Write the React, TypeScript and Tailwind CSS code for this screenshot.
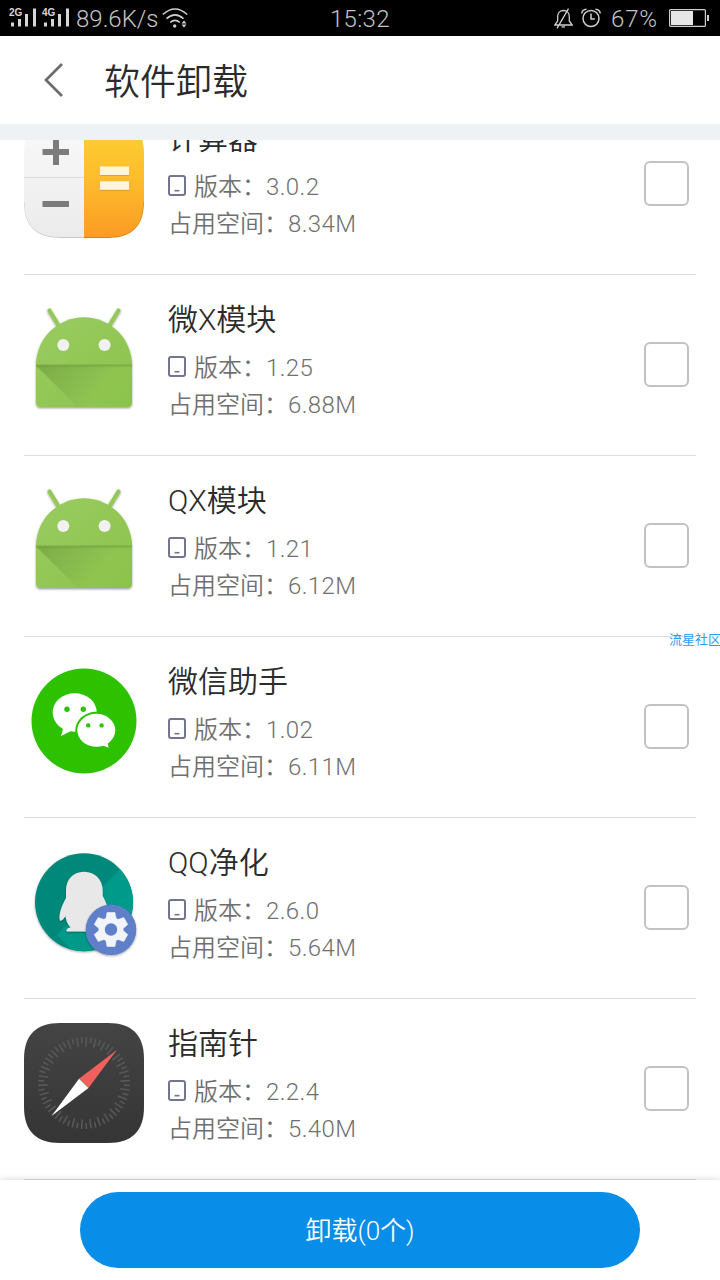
import React from "react";

const CJK = "font-['Roboto','Noto_Sans_CJK_SC',sans-serif]";

function CalculatorIcon() {
  return (
    <svg viewBox="0 0 120 120" className="size-[120px]">
      <defs>
        <linearGradient id="calcOrange" x1="0" y1="0" x2="0" y2="1">
          <stop offset="0.1" stopColor="#fdce33" />
          <stop offset="0.5" stopColor="#fdbd2c" />
          <stop offset="1" stopColor="#fb9b23" />
        </linearGradient>
        <linearGradient id="calcGrey" x1="0" y1="0" x2="0" y2="1">
          <stop offset="0" stopColor="#fafafa" />
          <stop offset="1" stopColor="#ebebeb" />
        </linearGradient>
        <clipPath id="calcShape">
          <path d="M36 0H84C108 0 120 12 120 36V84C120 108 108 120 84 120H36C12 120 0 108 0 84V36C0 12 12 0 36 0Z" />
        </clipPath>
      </defs>
      <g clipPath="url(#calcShape)">
        <rect width="60" height="120" fill="url(#calcGrey)" />
        <rect x="60" width="60" height="120" fill="url(#calcOrange)" />
        <rect y="59" width="60" height="1" fill="#dcdcdc" />
        <path d="M0 84C0 108 12 119.5 36 119.5H84C108 119.5 119.5 108 119.5 84" fill="none" stroke="#000" strokeOpacity="0.15" />
      </g>
      <path d="M29 20.500H35V31H45V37H35V47H29V37H18.500V31H29Z" fill="#7c7c7c" />
      <rect x="18.500" y="83" width="26.500" height="6" rx="0.500" fill="#7c7c7c" />
      <g fill="#c97f10" opacity="0.4">
        <rect x="76" y="49.500" width="29" height="8.500" />
        <rect x="76" y="64.500" width="29" height="8.500" />
      </g>
      <rect x="76" y="48.500" width="29" height="8.500" fill="#fff5df" />
      <rect x="76" y="63.300" width="29" height="8.500" fill="#fff5df" />
    </svg>
  );
}

function AndroidIcon({ id }: { id: string }) {
  return (
    <svg viewBox="0 0 120 120" className="size-[120px]">
      <defs>
        <linearGradient id={`${id}fold`} gradientUnits="userSpaceOnUse" x1="22" y1="66" x2="66" y2="104">
          <stop offset="0" stopColor="#567d2c" stopOpacity="0.36" />
          <stop offset="1" stopColor="#567d2c" stopOpacity="0" />
        </linearGradient>
        <linearGradient id={`${id}line`} x1="0" y1="0" x2="0" y2="1">
          <stop offset="0" stopColor="#4c7425" stopOpacity="0.36" />
          <stop offset="1" stopColor="#4c7425" stopOpacity="0" />
        </linearGradient>
        <linearGradient id={`${id}body`} x1="0" y1="0" x2="1" y2="1">
          <stop offset="0" stopColor="#9acb61" />
          <stop offset="1" stopColor="#8bc34a" />
        </linearGradient>
        <filter id={`${id}shadow`} x="-10%" y="-10%" width="120%" height="125%">
          <feDropShadow dx="0" dy="1.200" stdDeviation="1" floodOpacity="0.4" />
        </filter>
      </defs>
      <g filter={`url(#${id}shadow)`}>
        <path d="M25.500 11.500L35.500 28M94.500 11.500L84.500 28" stroke="#94c95a" strokeWidth="4.300" strokeLinecap="round" />
        <path d="M12 66.300A48 48 0 0 1 108 66.300V103.500Q108 108 103.500 108H16.500Q12 108 12 103.500Z" fill={`url(#${id}body)`} />
      </g>
      <path d="M12 66.500H108V108H54Z" fill={`url(#${id}fold)`} />
      <rect x="12" y="65.500" width="96" height="3.500" fill={`url(#${id}line)`} />
      <circle cx="39.300" cy="46" r="6" fill="#f1f1f1" />
      <circle cx="80.600" cy="46" r="6" fill="#f1f1f1" />
    </svg>
  );
}

function WechatIcon() {
  return (
    <svg viewBox="0 0 120 120" className="size-[120px]">
      <circle cx="60" cy="60" r="52.500" fill="#2dc100" />
      <ellipse cx="50.700" cy="51.500" rx="22" ry="19.300" fill="#fff" />
      <path d="M39.500 66L37 75L48 69.500Z" fill="#fff" />
      <ellipse cx="72.300" cy="69.300" rx="21" ry="18.500" fill="#2dc100" />
      <ellipse cx="72.300" cy="69.300" rx="19" ry="16.500" fill="#fff" />
      <path d="M83 79L84.700 86.700L76 83.500Z" fill="#fff" />
      <g fill="#2dc100">
        <circle cx="43" cy="48.300" r="2.700" />
        <circle cx="59.300" cy="48.300" r="2.700" />
        <circle cx="64.200" cy="64.400" r="2.200" />
        <circle cx="77.600" cy="64.400" r="2.200" />
      </g>
    </svg>
  );
}

function PenguinIcon() {
  return (
    <svg viewBox="0 0 120 120" className="size-[120px]">
      <defs>
        <filter id="pengShadow" x="-15%" y="-15%" width="135%" height="135%">
          <feDropShadow dx="0" dy="1" stdDeviation="1.200" floodOpacity="0.35" />
        </filter>
        <clipPath id="pengClip">
          <circle cx="60" cy="60.300" r="49" />
        </clipPath>
      </defs>
      <circle cx="60" cy="60.300" r="49" fill="#00897a" filter="url(#pengShadow)" />
      <path d="M97 26L33 93L60 120H120V26Z" fill="#009a8a" clipPath="url(#pengClip)" />
      <g filter="url(#pengShadow)">
        <path
          d="M60 29.700C71.500 29.700 78.700 38 78.700 48.500V54C82 60 84.500 66 84.500 74L78 89.500H43C41.500 88 43 86.300 46.500 85.500C43.500 82 42 78.500 41.500 74C39.800 77 37.500 79.500 36 78.500C34.500 74 36.500 66 42 56V48.500C42 38 48.500 29.700 60 29.700Z"
          fill="#e9e8e9"
        />
      </g>
      <g filter="url(#pengShadow)">
        <circle cx="87" cy="87.800" r="25.300" fill="#5f80c8" />
      </g>
      <g transform="translate(87 87.500)" fill="#f1f4fb">
        {[0, 60, 120, 180, 240, 300].map((a) => (
          <path key={a} d="M-5.500 -9L-3.900 -17H3.900L5.500 -9Z" strokeLinejoin="round" stroke="#f1f4fb" strokeWidth="0.600" transform={`rotate(${a})`} />
        ))}
        <circle r="12.400" />
        <circle r="6.200" fill="#5f80c8" />
      </g>
    </svg>
  );
}

function CompassIcon() {
  const ticks = Array.from({ length: 60 }, (_, i) => i);
  return (
    <svg viewBox="0 0 120 120" className="size-[120px]">
      <defs>
        <linearGradient id="compassBg" x1="0" y1="0" x2="0" y2="1">
          <stop offset="0" stopColor="#444" />
          <stop offset="1" stopColor="#353535" />
        </linearGradient>
      </defs>
      <path d="M36 0H84C108 0 120 12 120 36V84C120 108 108 120 84 120H36C12 120 0 108 0 84V36C0 12 12 0 36 0Z" fill="url(#compassBg)" />
      <g stroke="#585858" strokeWidth="1.600">
        {ticks.map((i) => (
          <line key={i} x1="60" x2="60" y1="14" y2={i % 2 ? 20 : 23.5} transform={`rotate(${i * 6 + 3} 60 60)`} />
        ))}
      </g>
      <path d="M92.500 27.300L55 55.700L64.500 64.900Z" fill="#f0605e" />
      <path d="M27.800 92.800L55 55.700L64.500 64.900Z" fill="#fff" />
    </svg>
  );
}

type AppItem = { name: string; version: string; size: string; icon: React.ReactNode };

const items: AppItem[] = [
  { name: "计算器", version: "3.0.2", size: "8.34M", icon: <CalculatorIcon /> },
  { name: "微X模块", version: "1.25", size: "6.88M", icon: <AndroidIcon id="wx" /> },
  { name: "QX模块", version: "1.21", size: "6.12M", icon: <AndroidIcon id="qx" /> },
  { name: "微信助手", version: "1.02", size: "6.11M", icon: <WechatIcon /> },
  { name: "QQ净化", version: "2.6.0", size: "5.64M", icon: <PenguinIcon /> },
  { name: "指南针", version: "2.2.4", size: "5.40M", icon: <CompassIcon /> },
];

function Row({ item }: { item: AppItem }) {
  return (
    <li className="flex h-[181px] shrink-0 border-b border-[#dedede]">
      <div className="mt-6 size-[120px] shrink-0">{item.icon}</div>
      <div className="ml-6 flex-1 pt-[23px] font-[350]">
        <h2 className="text-[30px] leading-[44px] whitespace-nowrap text-[#2b2b2b]">{item.name}</h2>
        <div className="mt-2 flex text-2xl leading-[37px] whitespace-nowrap text-[#707070]">
          <svg viewBox="0 0 18 21" className="mt-1.5 mr-2 h-[21px] w-[18px]" fill="none" stroke="#73758f" strokeWidth="2">
            <rect x="1" y="1" width="16" height="19" rx="2" />
            <path d="M6.500 15.700H11.500" strokeWidth="1.600" />
          </svg>
          <span>版本：</span>
          <span className="tracking-[0.4px]">{item.version}</span>
        </div>
        <div className="flex text-2xl leading-[37px] whitespace-nowrap text-[#707070]">
          <span>占用空间：</span>
          <span className="tracking-[0.4px]">{item.size}</span>
        </div>
      </div>
      <div className="mt-[67px] mr-[7px] size-[45px] rounded-md border-2 border-[#c2c2c2]" />
    </li>
  );
}

function Signal({ label }: { label: string }) {
  return (
    <svg viewBox="0 0 28 20" className="h-5 w-7" fill="#d6d6d6">
      <text x="0" y="7.800" fontSize="10" fontWeight="700" fontFamily="Liberation Sans">
        {label}
      </text>
      <path d="M2 14.500h3v4h-3zM9 11h3v7.500h-3zM16 6h3v12.500h-3zM24 .5h3v18h-3z" />
    </svg>
  );
}

function StatusBar() {
  return (
    <div className="flex h-9 shrink-0 items-center bg-black text-2xl font-[350] text-[#c4c4c4]">
      <div className="flex w-[331px] items-center pl-[9px]">
        <Signal label="2G" />
        <div className="ml-[5px] flex">
          <Signal label="4G" />
        </div>
        <span className="ml-1.5 w-[86px] pt-0.5">89.6K/s</span>
        <svg viewBox="0 0 26 20" className="h-5 w-[26px]" fill="none" stroke="#cfcfcf" strokeWidth="1.600">
          <path d="M.8 6.500Q13 -4.500 25.200 6.500M4.500 10.700Q13 3 21.500 10.700M8.200 14.500Q13 10.200 17.800 14.500" />
          <circle cx="12.700" cy="18" r="1.700" fill="#cfcfcf" stroke="none" />
          <path d="M19.500 15.500L22 12.500L24.500 15.500ZM19.500 16.500L22 19.500L24.500 16.500Z" fill="#cfcfcf" stroke="none" />
        </svg>
      </div>
      <span className="-ml-px w-[60px] pt-0.5 tracking-[0.3px] whitespace-nowrap">15:32</span>
      <div className="flex flex-1 items-center justify-end pr-[11px]">
        <svg viewBox="0 0 19 21" className="h-[21px] w-[19px]" fill="none" stroke="#cfcfcf" strokeWidth="1.300">
          <path d="M.8 17H18.200L15.300 13V8.500C15.300 5 13 2.500 9.500 2.500S3.700 5 3.700 8.500V13ZM7.500 18.800H11M14.500 .7L3 20.300" />
        </svg>
        <svg viewBox="0 0 20 20" className="ml-2 size-5" fill="none" stroke="#cfcfcf" strokeWidth="1.500">
          <circle cx="10" cy="10.500" r="8" />
          <path d="M10 5.500V11H13.800M.8 5.500Q1 1.500 5.500 1.200M19.200 5.500Q19 1.500 14.500 1.200" />
        </svg>
        <span className="ml-2.5 pt-0.5 tracking-[0.9px]">67%</span>
        <svg viewBox="0 0 40 18" className="ml-[11px] h-[18px] w-10">
          <rect x="0.600" y="0.600" width="35.800" height="16.800" rx="1" fill="none" stroke="#cfcfcf" strokeWidth="1.200" />
          <rect x="2" y="2" width="22" height="14" fill="#e6e6e6" />
          <rect x="38" y="6" width="2" height="6" fill="#cfcfcf" />
        </svg>
      </div>
    </div>
  );
}

export default function App() {
  return (
    <main className={`relative flex h-[1280px] w-[720px] flex-col overflow-hidden bg-white ${CJK}`}>
      <StatusBar />
      <header className="flex h-[88px] shrink-0 items-center">
        <svg viewBox="0 0 20 34" className="ml-11 h-[34px] w-5" fill="none" stroke="#6b6b6b" strokeWidth="2.700">
          <path d="M18 1L2 17L18 33" />
        </svg>
        <h1 className="ml-10 pt-[5px] text-4xl font-[350] text-[#2b2b2b]">软件卸载</h1>
      </header>
      <div className="h-4 shrink-0 bg-[#eef2f4]" />
      <ul className="flex h-[1040px] shrink-0 flex-col overflow-hidden px-6 *:first:-mt-[46px]">
        {items.map((item) => (
          <Row key={item.name} item={item} />
        ))}
      </ul>
      <footer className="flex h-[100px] shrink-0 justify-center bg-white pt-3 shadow-[0_-1px_6px_rgba(0,0,0,0.14)]">
        <button className="h-[76px] w-[560px] rounded-full bg-[#088de8] pt-[3px] text-[26px] font-[350] text-white">卸载(0个)</button>
      </footer>
      <div className="absolute top-[632px] left-[669px] text-[13px] leading-4 whitespace-nowrap text-[#2a9df4]">流星社区</div>
    </main>
  );
}
